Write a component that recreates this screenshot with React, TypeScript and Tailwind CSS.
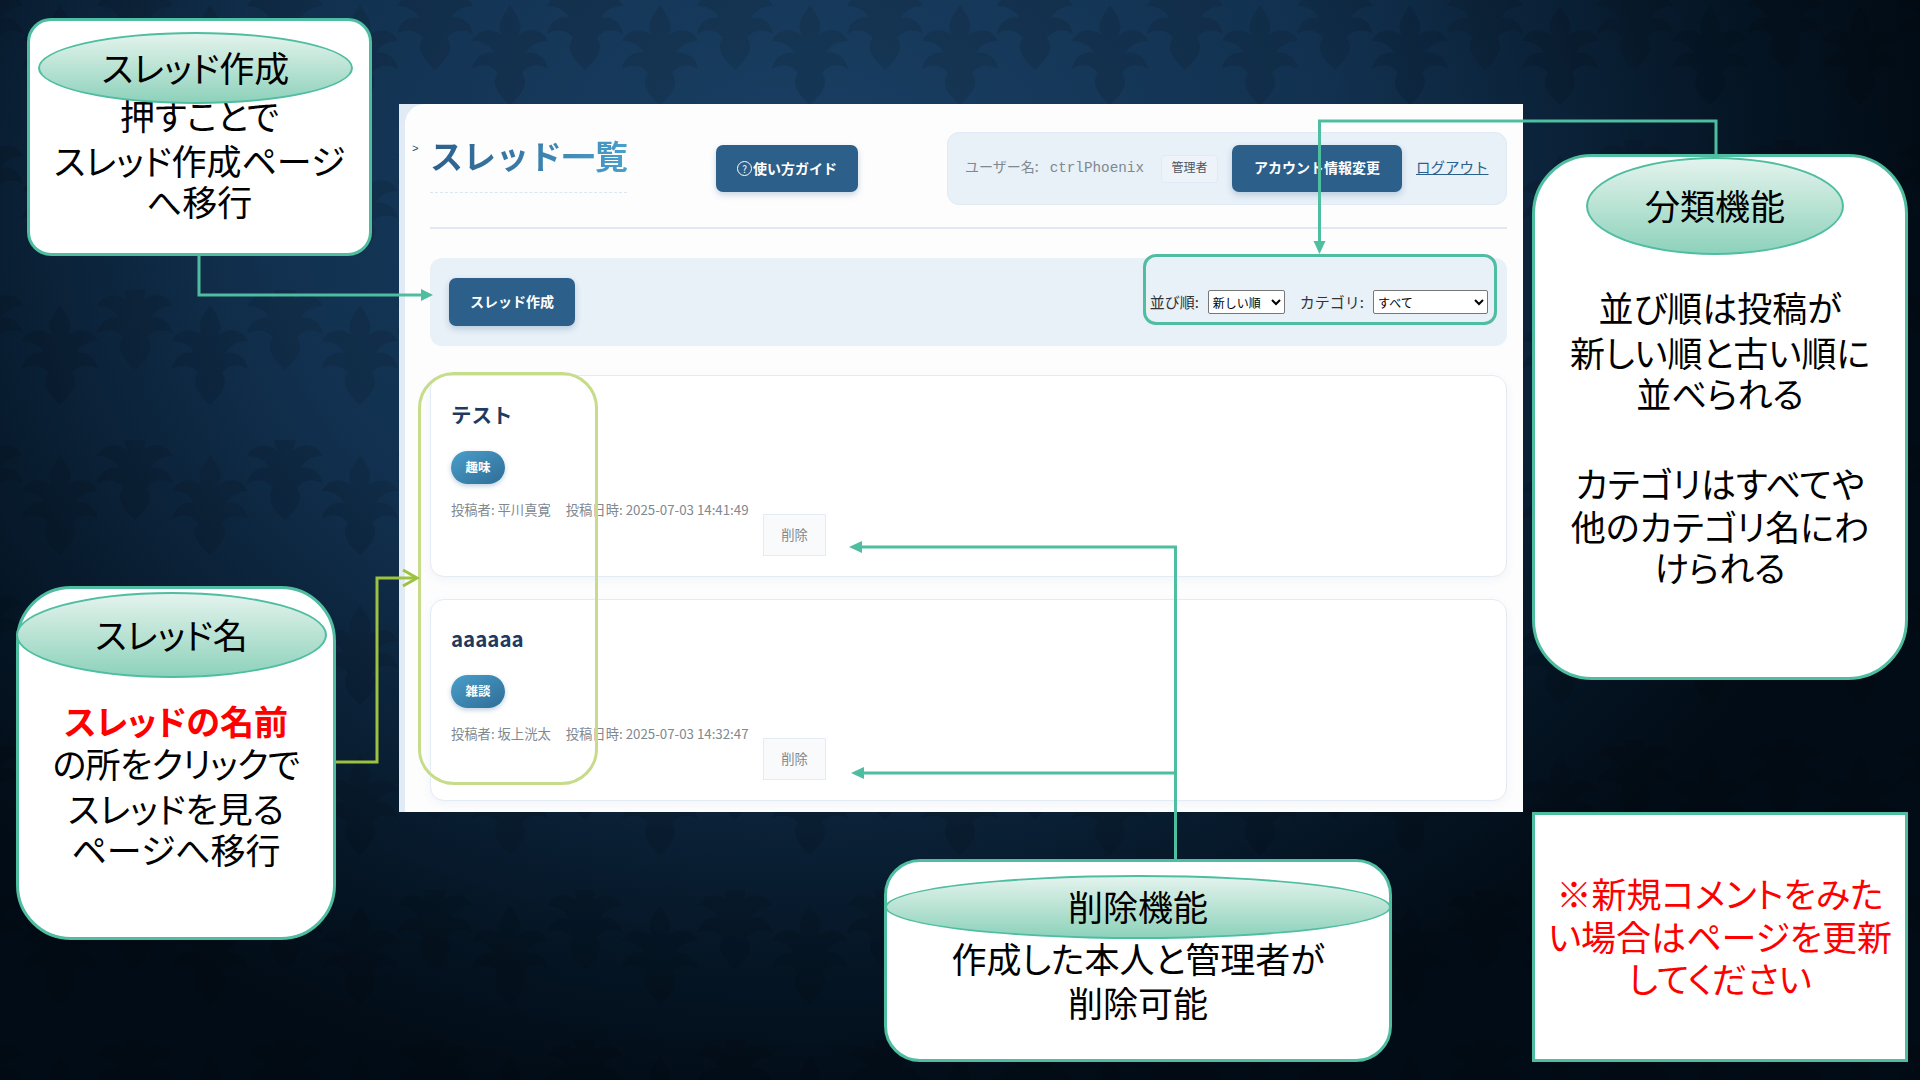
import React from 'react';

const jpFont = "font-['Noto_Sans_CJK_JP','Noto_Sans',sans-serif]";

interface CalloutProps {
  box: string;
  oval: string;
  title: string;
  body: string;
  children: React.ReactNode;
}

const Callout: React.FC<CalloutProps> = ({ box, oval, title, body, children }) => (
  <div className={`absolute bg-white border-[3px] border-[#4fbda0] text-black text-center text-[35px] leading-[42px] [font-feature-settings:'palt'] ${box}`}>
    <div className={body}>{children}</div>
    <div className={`absolute flex items-center justify-center rounded-[50%] border-[2.5px] border-[#4fbda0] bg-gradient-to-b from-[#e3f3ed] to-[#8dd2bb] pb-[2px] ${oval}`}>
      {title}
    </div>
  </div>
);

const Backdrop = () => (
  <svg className="absolute inset-0" width="1920" height="1080" xmlns="http://www.w3.org/2000/svg">
    <defs>
      <path
        id="damask"
        d="M0 -50C8 -38 14 -30 8 -20C20 -28 32 -26 38 -14C28 -14 20 -10 16 -2C26 -4 36 2 38 14C28 8 18 10 12 18C18 26 16 36 0 50C-16 36 -18 26 -12 18C-18 10 -28 8 -38 14C-36 2 -26 -4 -16 -2C-20 -10 -28 -14 -38 -14C-32 -26 -20 -28 -8 -20C-14 -30 -8 -38 0 -50Z"
      />
      <pattern id="wall" width="300" height="150" patternUnits="userSpaceOnUse" patternTransform="translate(-10 -10)">
        <use href="#damask" transform="translate(70 65)" />
        <use href="#damask" transform="translate(145 30)" />
        <use href="#damask" transform="translate(220 65)" />
        <use href="#damask" transform="translate(295 30)" />
        <use href="#damask" transform="translate(-5 30)" />
      </pattern>
    </defs>
    <rect width="1920" height="1080" fill="url(#wall)" fillOpacity="0.11" />
  </svg>
);

// connector lines that run over the slide
const Connectors = () => (
  <svg className="absolute inset-0 pointer-events-none" width="1920" height="1080" xmlns="http://www.w3.org/2000/svg">
    <g fill="none" stroke="#4fbda0" strokeWidth="3">
      <path d="M199 256V295H421" />
      <path d="M1716 154V121H1319.500V241" />
      <path d="M1175.500 859V547H862" />
      <path d="M1175.500 773H864" />
    </g>
    <g fill="#4fbda0">
      <path d="M433 295L421 289V301Z" />
      <path d="M1319.500 254L1313.500 241H1325.500Z" />
      <path d="M849 547L862 541V553Z" />
      <path d="M851 773L864 767V779Z" />
    </g>
    <g fill="none" stroke="#9dc23f" strokeWidth="3">
      <path d="M336 762H377V578H416" />
      <path d="M403 570L417 578L403 586" />
    </g>
  </svg>
);

const ThreadCard = ({ title, tag, author, date }: { title: string; tag: string; author: string; date: string }) => (
  <div className="h-[202px] rounded-[14px] border border-[#e3ebf5] bg-white pl-[20px] pt-[24px] shadow-[0_3px_10px_rgba(44,95,138,0.06)]">
    <div className="text-[20.5px] leading-[28px] font-semibold text-[#1e3a5f]">{title}</div>
    <span className="mt-[23px] flex h-[33px] w-[54px] items-center justify-center rounded-full bg-gradient-to-br from-[#4a9fcb] to-[#2f6d97] text-[12.5px] font-bold text-white shadow-[0_2px_5px_rgba(44,95,138,0.3)]">
      {tag}
    </span>
    <div className="mt-[16px] flex items-start">
      <div className="flex w-[298px] gap-[15px] text-[13.3px] leading-[20px] whitespace-nowrap text-[#808890]">
        <span>投稿者: {author}</span>
        <span>投稿日時: {date}</span>
      </div>
      <button className="mt-[14px] ml-[14px] h-[42px] w-[63px] border border-[#e3ebf5] bg-[#f8fafc] text-[13.3px] text-[#808890]">
        削除
      </button>
    </div>
  </div>
);

const PrimaryButton = ({ className, children }: { className: string; children: React.ReactNode }) => (
  <button className={`flex items-center justify-center rounded-[7px] bg-[#2c5f8a] text-[14px] font-bold text-white shadow-[0_3px_6px_rgba(44,95,138,0.25)] ${className}`}>
    {children}
  </button>
);

export default function App() {
  return (
    <div className={`relative h-[1080px] w-[1920px] overflow-hidden bg-[radial-gradient(ellipse_58%_85%_at_42%_18%,#1a4064_0%,#123150_48%,#051524_85%,#020c16_100%)] ${jpFont}`}>
      <Backdrop />

      {/* captured page */}
      <div className="absolute top-[104px] left-[399px] h-[708px] w-[1124px] overflow-hidden bg-[#e1ebf5] pl-[6px]">
        <div className="h-full rounded-tl-[20px] bg-[#fdfdfe] pr-[16px] pl-[25px]">
          <div className="relative flex h-[125px] items-start border-b-2 border-[#e0e9f2] pt-[28px]">
            <span className="absolute top-[39px] -left-[18px] font-['Liberation_Mono',monospace] text-[11px] leading-[12px] text-[#1e4a73]">&gt;</span>
            <div className="h-[61px] w-[197px] border-b border-dashed border-[#dbe6f0]">
              <div className="-mt-px bg-gradient-to-r from-[#2c5f8a] to-[#4a9fcb] bg-clip-text text-[33px] leading-[48px] font-bold whitespace-nowrap text-transparent">
                スレッド一覧
              </div>
            </div>
            <PrimaryButton className="mt-[13px] ml-[89px] h-[47px] w-[142px]">
              <span className="mr-px flex h-[15px] w-[15px] items-center justify-center rounded-full border border-white text-[10px] leading-none font-normal">?</span>
              使い方ガイド
            </PrimaryButton>
            <div className="ml-auto flex h-[73px] w-[560px] items-center rounded-[12px] border border-[#e1eaf4] bg-[#e8f0f8] pl-[17px]">
              <span className="w-[196px] pb-[2px] text-[14px] whitespace-nowrap text-[#808890]">
                ユーザー名:<span className="ml-[11px] font-['Liberation_Mono',monospace] text-[14.3px]">ctrlPhoenix</span>
              </span>
              <span className="flex h-[28px] w-[57px] items-center justify-center rounded-[4px] border border-[#e1eaf4] bg-[#edf3f9] pb-[4px] text-[12px] text-[#4b5563]">管理者</span>
              <PrimaryButton className="ml-[14px] h-[47px] w-[170px] pb-[3px]">アカウント情報変更</PrimaryButton>
              <a className="ml-[14px] pb-[4px] text-[14.5px] whitespace-nowrap text-[#2c5f8a] underline">ログアウト</a>
            </div>
          </div>

          <div className="mt-[29px] flex h-[88px] items-center rounded-[12px] bg-[#e8f0f8] px-[19px]">
            <PrimaryButton className="h-[48px] w-[126px] pb-px">スレッド作成</PrimaryButton>
            <div className="ml-auto flex items-center text-[15px] text-[#333]">
              <label className="mr-[9px]">並び順:</label>
              <select defaultValue="new" className="h-[24px] w-[77px] rounded-[2px] border border-[#777] bg-white text-[12px] text-black">
                <option value="new">新しい順</option>
              </select>
              <label className="mr-[9px] ml-[15px]">カテゴリ:</label>
              <select defaultValue="all" className="h-[24px] w-[115px] rounded-[2px] border border-[#777] bg-white text-[12px] text-black">
                <option value="all">すべて</option>
              </select>
            </div>
          </div>

          <div className="mt-[29px] flex flex-col gap-[22px]">
            <ThreadCard title="テスト" tag="趣味" author="平川真寛" date="2025-07-03 14:41:49" />
            <ThreadCard title="aaaaaa" tag="雑談" author="坂上洸太" date="2025-07-03 14:32:47" />
          </div>
        </div>
      </div>

      {/* highlight frames over the capture */}
      <div className="absolute top-[254px] left-[1143px] h-[71px] w-[354px] rounded-[13px] border-[3px] border-[#4fbda0]" />
      <div className="absolute top-[372px] left-[418px] h-[413px] w-[180px] rounded-[36px] border-[3px] border-[#c6dc8b]" />

      <Connectors />

      <Callout
        box="top-[18px] left-[27px] h-[238px] w-[345px] rounded-[24px]"
        oval="top-[11px] left-[8px] h-[72px] w-[315px]"
        title="スレッド作成"
        body="pt-[73px]"
      >
        <div>押すことで</div>
        <div className="mt-[3px]">スレッド作成ページ</div>
        <div className="-mt-px">へ移行</div>
      </Callout>

      <Callout
        box="top-[586px] left-[16px] h-[354px] w-[320px] rounded-[55px]"
        oval="top-[3px] -left-[3px] h-[86px] w-[311px]"
        title="スレッド名"
        body="pt-[111px]"
      >
        <div className="text-[34px] font-bold text-[#ff0000]">スレッドの名前</div>
        <div className="tracking-[-0.7px]">の所をクリックで</div>
        <div className="mt-[3px]">スレッドを見る</div>
        <div className="-mt-px">ページへ移行</div>
      </Callout>

      <Callout
        box="top-[859px] left-[884px] h-[203px] w-[508px] rounded-[36px]"
        oval="top-[13px] -left-[2px] h-[64px] w-[506px]"
        title="削除機能"
        body="pt-[75px]"
      >
        <div>作成した本人と管理者が</div>
        <div className="mt-[2px]">削除可能</div>
      </Callout>

      <Callout
        box="top-[154px] left-[1532px] h-[526px] w-[376px] rounded-[60px]"
        oval="top-0 left-[51px] h-[98px] w-[258px]"
        title="分類機能"
        body="pt-[129px]"
      >
        <div>並び順は投稿が</div>
        <div className="mt-[3px]">新しい順と古い順に</div>
        <div className="-mt-px">並べられる</div>
        <div className="mt-[48px]">カテゴリはすべてや</div>
        <div className="mt-px">他のカテゴリ名にわ</div>
        <div className="-mt-px">けられる</div>
      </Callout>

      <div className="absolute top-[812px] left-[1532px] h-[250px] w-[376px] border-[3px] border-[#4fbda0] bg-white pt-[57px] text-center text-[35px] leading-[42px] text-[#ff0000] [font-feature-settings:'palt']">
        <div>※新規コメントをみた</div>
        <div className="mt-px">い場合はページを更新</div>
        <div>してください</div>
      </div>
    </div>
  );
}
